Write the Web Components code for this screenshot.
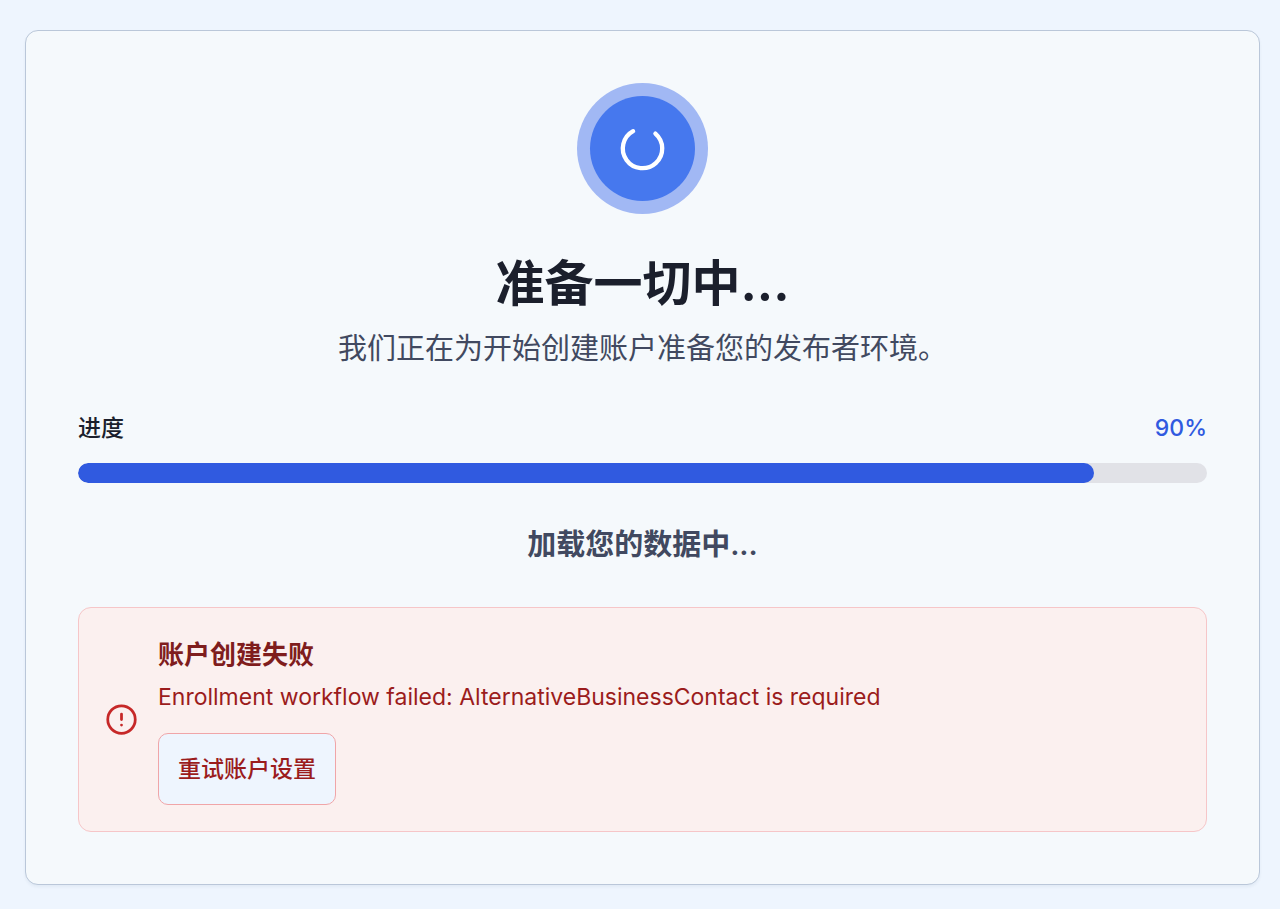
<!DOCTYPE html>
<html lang="zh-CN">
<head>
<meta charset="UTF-8">
<meta name="viewport" content="width=device-width, initial-scale=1">
<title>准备一切中...</title>
<style>
  :root {
    --page: #eef5fe;
    --surface: #f5f9fc;
    --ink: #1b1f2c;
    --muted: #414960;
    --accent: #305ae0;
    --danger: #c62828;
    --danger-dark: #9b1c1c;
  }
  body {
    margin: 0;
    padding: 30px 20px 25px 25px;
    background: var(--page);
    color: var(--ink);
    font-family: Inter, "Noto Sans CJK SC", sans-serif;
  }
</style>
</head>
<body>
<setup-card>
  <status-spinner slot="icon"></status-spinner>
  <span slot="title">准备一切中...</span>
  <span slot="subtitle">我们正在为开始创建账户准备您的发布者环境。</span>
  <progress-meter value="90">进度</progress-meter>
  <status-text>加载您的数据中...</status-text>
  <error-alert>
    <span slot="title">账户创建失败</span>
    Enrollment workflow failed: AlternativeBusinessContact is required
    <retry-button slot="action">重试账户设置</retry-button>
  </error-alert>
</setup-card>

<script>
class SetupCard extends HTMLElement {
  connectedCallback() {
    this.attachShadow({ mode: 'open' });
    this.shadowRoot.innerHTML = `
      <style>
        :host {
          display: block;
          padding: 52px;
          background: var(--surface);
          border: 1px solid #bac7d9;
          border-radius: 13px;
          box-shadow: 0 2px 3px rgba(30, 60, 110, 0.06);
        }
        header {
          display: flex;
          flex-direction: column;
          align-items: center;
          text-align: center;
        }
        h1 {
          margin: 38px 0 0;
          font-size: 49px;
          line-height: 64px;
          font-weight: 700;
        }
        p {
          margin: 11px 0 0;
          font-size: 29px;
          line-height: 44px;
          color: var(--muted);
        }
      </style>
      <header>
        <slot name="icon"></slot>
        <h1><slot name="title"></slot></h1>
        <p><slot name="subtitle"></slot></p>
      </header>
      <slot></slot>
    `;
  }
}
customElements.define('setup-card', SetupCard);

class StatusSpinner extends HTMLElement {
  connectedCallback() {
    this.attachShadow({ mode: 'open' });
    this.shadowRoot.innerHTML = `
      <style>
        :host {
          display: flex;
          align-items: center;
          justify-content: center;
          box-sizing: border-box;
          width: 131px;
          height: 131px;
          padding: 13px;
          background: #a1b8f4;
          border-radius: 50%;
        }
        div {
          display: grid;
          place-items: center;
          width: 100%;
          height: 100%;
          background: #4678ee;
          border-radius: 50%;
        }
      </style>
      <div>
        <svg width="53" height="53" viewBox="-26.5 -26.5 53 53" fill="none" stroke="#fff" stroke-width="4.3" stroke-linecap="round" aria-hidden="true">
          <path d="M12.9 -14.9A19.7 19.7 0 1 1 -9.4 -17.3"/>
        </svg>
      </div>
    `;
  }
}
customElements.define('status-spinner', StatusSpinner);

class ProgressMeter extends HTMLElement {
  connectedCallback() {
    const value = Number(this.getAttribute('value'));
    this.attachShadow({ mode: 'open' });
    this.shadowRoot.innerHTML = `
      <style>
        :host {
          display: block;
          margin-top: 40px;
          font-size: 23px;
          line-height: 34px;
          font-weight: 500;
        }
        .row {
          display: flex;
          justify-content: space-between;
          margin-bottom: 18px;
        }
        output { color: var(--accent); }
        progress {
          display: block;
          appearance: none;
          width: 100%;
          height: 20px;
          border: 0;
          border-radius: 10px;
          background: #e1e2e7;
          overflow: hidden;
        }
        progress::-webkit-progress-bar { background: #e1e2e7; }
        progress::-webkit-progress-value {
          background: var(--accent);
          border-radius: 10px;
        }
      </style>
      <div class="row">
        <label for="bar"><slot></slot></label>
        <output for="bar">${value}%</output>
      </div>
      <progress id="bar" max="100" value="${value}"></progress>
    `;
  }
}
customElements.define('progress-meter', ProgressMeter);

class StatusText extends HTMLElement {
  connectedCallback() {
    this.attachShadow({ mode: 'open' });
    this.shadowRoot.innerHTML = `
      <style>
        :host {
          display: block;
          margin: 40px 0;
          color: var(--muted);
          font-size: 29px;
          line-height: 44px;
          font-weight: 600;
          text-align: center;
        }
      </style>
      <slot></slot>
    `;
  }
}
customElements.define('status-text', StatusText);

class ErrorAlert extends HTMLElement {
  connectedCallback() {
    this.setAttribute('role', 'alert');
    this.attachShadow({ mode: 'open' });
    this.shadowRoot.innerHTML = `
      <style>
        :host {
          display: flex;
          align-items: center;
          gap: 20px;
          padding: 26px;
          background: #fbf0ef;
          border: 1px solid #f6c6c8;
          border-radius: 13px;
          color: var(--danger-dark);
        }
        svg { flex: none; }
        h2 {
          margin: 0;
          font-size: 26px;
          line-height: 42px;
          font-weight: 600;
          color: #7f1d1d;
        }
        p {
          margin: 4px 0 19px;
          font-size: 23px;
          line-height: 34px;
        }
      </style>
      <svg width="33" height="33" viewBox="0 0 24 24" fill="none" stroke="var(--danger)" stroke-width="2" stroke-linecap="round" aria-hidden="true">
        <circle cx="12" cy="12" r="10"/>
        <path d="M12 8v4M12 16h.01"/>
      </svg>
      <div>
        <h2><slot name="title"></slot></h2>
        <p><slot></slot></p>
        <slot name="action"></slot>
      </div>
    `;
  }
}
customElements.define('error-alert', ErrorAlert);

class RetryButton extends HTMLElement {
  connectedCallback() {
    this.attachShadow({ mode: 'open' });
    this.shadowRoot.innerHTML = `
      <style>
        :host { display: block; }
        button {
          display: block;
          padding: 18px 19px;
          background: var(--page);
          color: var(--danger-dark);
          border: 1px solid #f0a5a8;
          border-radius: 10px;
          font: inherit;
          font-size: 23px;
          line-height: 34px;
          font-weight: 500;
          cursor: pointer;
        }
        button:hover { background: #fbefee; }
      </style>
      <button type="button"><slot></slot></button>
    `;
  }
}
customElements.define('retry-button', RetryButton);
</script>
</body>
</html>
